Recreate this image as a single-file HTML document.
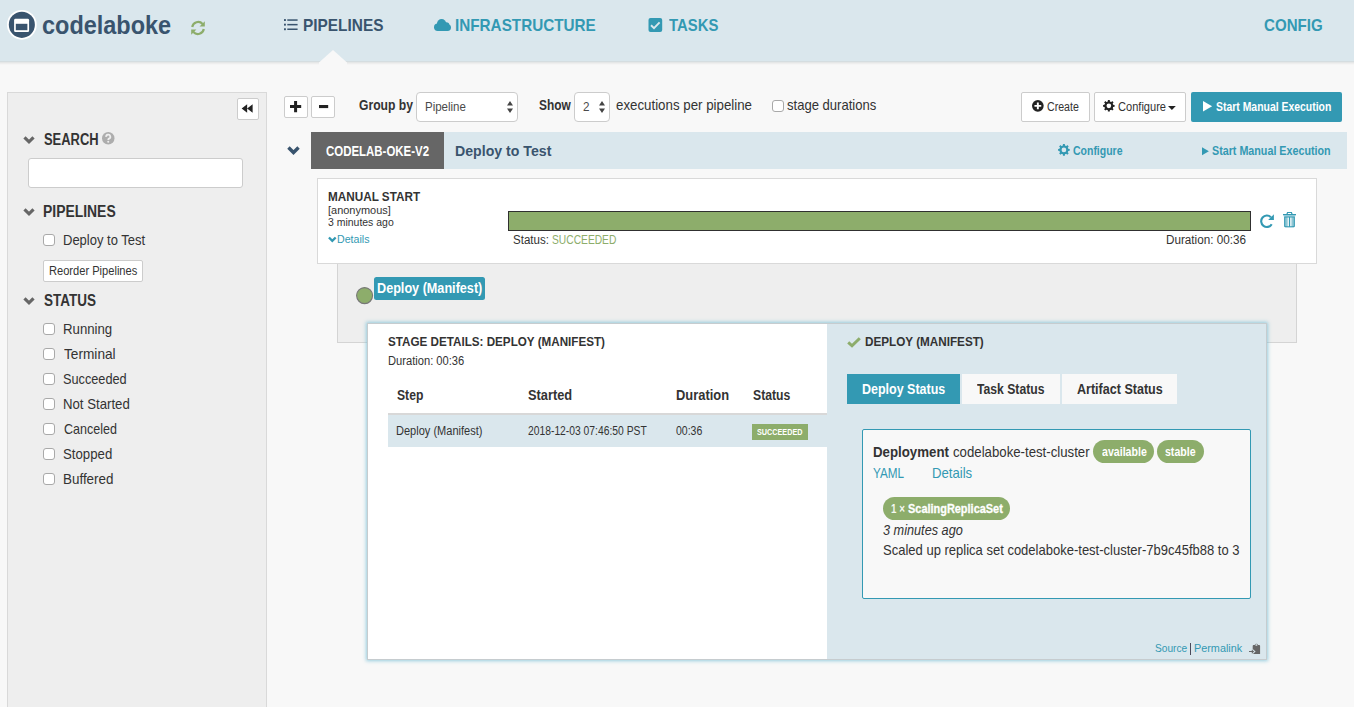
<!DOCTYPE html>
<html><head><meta charset="utf-8"><title>codelaboke - Pipelines</title>
<style>
html,body{margin:0;padding:0}
body{width:1354px;height:707px;overflow:hidden;background:#f8f8f8;font-family:"Liberation Sans",sans-serif;position:relative;color:#333333}
.a{position:absolute;box-sizing:border-box}
.t{position:absolute;line-height:1;white-space:nowrap;transform-origin:0 50%;display:block}
.btn{background:#fff;border:1px solid #ccc;border-radius:2px}
.cb{width:12px;height:12px;background:#fff;border:1px solid #a9a9a9;border-radius:3px}
svg{position:absolute;overflow:visible}
</style></head>
<body>

<!-- header -->
<div class="a" style="left:0;top:0;width:1354px;height:61px;background:#dae7ed"></div>
<div class="a" style="left:0;top:61px;width:1354px;height:4px;background:linear-gradient(#d5dde0 0,#d5dde0 25%,#e5e7e7 25%,#e5e7e7 50%,#eeeeee 50%,#eeeeee 75%,#f5f5f5 75%)"></div>
<svg style="left:319px;top:50px" width="28" height="15" viewBox="0 0 28 15"><path d="M0 12.5 L14 0 L28 12.5 V15 H0 Z" fill="#f8f8f8"/></svg>
<!-- logo -->
<svg style="left:7.3px;top:9.9px" width="29.7" height="29.7" viewBox="0 0 29.7 29.7"><circle cx="14.85" cy="14.85" r="14.85" fill="#fff"/><circle cx="14.85" cy="14.85" r="13.05" fill="#39546e"/><rect x="7.1" y="8.85" width="15" height="13.25" rx="1.4" fill="#fff"/><rect x="8.8" y="13.8" width="11.6" height="6.4" fill="#39546e"/></svg>
<!-- refresh icon -->
<svg style="left:190.3px;top:19.5px" width="16" height="16" viewBox="0 0 16 16"><g fill="none" stroke="#8dad6b" stroke-width="2.2"><path d="M2.2 7 A6 6 0 0 1 12.6 4"/><path d="M13.8 9 A6 6 0 0 1 3.4 12"/></g><path d="M14.8 1.2 V6.4 H9.6 Z" fill="#8dad6b"/><path d="M1.2 14.8 V9.6 H6.4 Z" fill="#8dad6b"/></svg>
<!-- nav icons -->
<svg style="left:283.9px;top:19.2px" width="13.6" height="11.3" viewBox="0 0 13.6 11.3"><g fill="#39546e"><rect x="0" y="0.1" width="1.9" height="1.9"/><rect x="3.3" y="0.3" width="10.3" height="1.5"/><rect x="0" y="4.7" width="1.9" height="1.9"/><rect x="3.3" y="4.9" width="10.3" height="1.5"/><rect x="0" y="9.3" width="1.9" height="1.9"/><rect x="3.3" y="9.5" width="10.3" height="1.5"/></g></svg>
<svg style="left:434px;top:19px" width="17" height="12" viewBox="0 0 17 12"><g fill="#3399b3"><circle cx="3.7" cy="8.3" r="3.7"/><circle cx="7.6" cy="4.7" r="4.7"/><circle cx="12.2" cy="6.4" r="3.2"/><circle cx="13.6" cy="8.6" r="3.4"/><rect x="3.7" y="6" width="9.9" height="6"/></g></svg>
<svg style="left:647.5px;top:18px" width="15" height="14" viewBox="0 0 15 14"><rect x="0.5" y="0" width="13.7" height="14" rx="2" fill="#3399b3"/><path d="M3 7.2 L6 10.1 L11.6 4.3" fill="none" stroke="#dae7ed" stroke-width="1.9"/></svg>

<!-- sidebar -->
<div class="a" style="left:7px;top:92px;width:260px;height:640px;background:#eeeeee;border:1px solid #d9d9d9"></div>
<div class="a btn" style="left:237px;top:98px;width:22px;height:22px"></div>
<svg style="left:240.8px;top:104.2px" width="12.3" height="9" viewBox="0 0 14 11"><path d="M7 0.3 V10.7 L0.3 5.5 Z M13.7 0.3 V10.7 L7 5.5 Z" fill="#222"/></svg>
<svg style="left:23px;top:136.4px" width="12" height="7.9" viewBox="0 0 11 7.5"><path d="M1.2 1.3 L5.5 5.6 L9.8 1.3" fill="none" stroke="#666" stroke-width="3.0" stroke-linejoin="miter"/></svg>
<svg style="left:23px;top:208.4px" width="12" height="7.9" viewBox="0 0 11 7.5"><path d="M1.2 1.3 L5.5 5.6 L9.8 1.3" fill="none" stroke="#666" stroke-width="3.0" stroke-linejoin="miter"/></svg>
<svg style="left:23px;top:297.4px" width="12" height="7.9" viewBox="0 0 11 7.5"><path d="M1.2 1.3 L5.5 5.6 L9.8 1.3" fill="none" stroke="#666" stroke-width="3.0" stroke-linejoin="miter"/></svg>
<svg style="left:102.1px;top:132px" width="12.5" height="12.5" viewBox="0 0 12.6 12.6"><circle cx="6.3" cy="6.3" r="6.3" fill="#adadad"/><path d="M4.2 4.9 A2.1 2.1 0 1 1 7 6.7 Q6.3 7.1 6.3 8" fill="none" stroke="#eee" stroke-width="1.8"/><circle cx="6.3" cy="9.9" r="1.05" fill="#eee"/></svg>
<div class="a" style="left:28px;top:158px;width:215px;height:30px;background:#fff;border:1px solid #ccc;border-radius:3px"></div>
<div class="a cb" style="left:43px;top:234px"></div>
<div class="a btn" style="left:43px;top:260px;width:100px;height:22px"></div>
<div class="a cb" style="left:43px;top:323px"></div><div class="a cb" style="left:43px;top:348px"></div><div class="a cb" style="left:43px;top:373px"></div><div class="a cb" style="left:43px;top:398px"></div><div class="a cb" style="left:43px;top:423px"></div><div class="a cb" style="left:43px;top:448px"></div><div class="a cb" style="left:43px;top:473px"></div>

<!-- toolbar -->
<div class="a btn" style="left:284px;top:96px;width:24px;height:22px"></div>
<svg style="left:290px;top:100.8px" width="11.2" height="11.2" viewBox="0 0 11.2 11.2"><path d="M4.1 0 H7.1 V4.1 H11.2 V7.1 H7.1 V11.2 H4.1 V7.1 H0 V4.1 H4.1 Z" fill="#222"/></svg>
<div class="a btn" style="left:311px;top:96px;width:24px;height:22px"></div>
<svg style="left:319px;top:104.8px" width="9.2" height="3.1" viewBox="0 0 9.2 3.1"><rect width="9.2" height="3.1" fill="#222"/></svg>
<div class="a" style="left:416px;top:92px;width:102px;height:30px;background:#fff;border:1px solid #ccc;border-radius:4px"></div>
<svg style="left:507.3px;top:101px" width="6" height="12" viewBox="0 0 6 12"><path d="M3 0 L6 4.6 H0 Z M3 12 L6 7.4 H0 Z" fill="#444"/></svg>
<div class="a" style="left:574px;top:92px;width:36px;height:30px;background:#fff;border:1px solid #ccc;border-radius:4px"></div>
<svg style="left:599.3px;top:101px" width="6" height="12" viewBox="0 0 6 12"><path d="M3 0 L6 4.6 H0 Z M3 12 L6 7.4 H0 Z" fill="#444"/></svg>
<div class="a cb" style="left:772px;top:100px"></div>
<div class="a btn" style="left:1021px;top:92px;width:69px;height:30px;border-radius:2px"></div>
<svg style="left:1032.1px;top:99.9px" width="11.7" height="11.7" viewBox="0 0 11 11"><circle cx="5.5" cy="5.5" r="5.5" fill="#222"/><path d="M4.6 2.3 H6.4 V4.6 H8.7 V6.4 H6.4 V8.7 H4.6 V6.4 H2.3 V4.6 H4.6 Z" fill="#fff"/></svg>
<div class="a btn" style="left:1094px;top:92px;width:92px;height:30px;border-radius:2px"></div>
<svg style="left:1103px;top:100.1px" width="11.7" height="11.7" viewBox="0 0 11.7 11.7"><circle cx="5.85" cy="5.85" r="4.43" fill="#222"/><path d="M4.81 1.65 L4.89 0.08 L6.81 0.08 L6.89 1.65 L8.08 2.14 L9.25 1.09 L10.61 2.45 L9.56 3.62 L10.05 4.81 L11.62 4.89 L11.62 6.81 L10.05 6.89 L9.56 8.08 L10.61 9.25 L9.25 10.61 L8.08 9.56 L6.89 10.05 L6.81 11.62 L4.89 11.62 L4.81 10.05 L3.62 9.56 L2.45 10.61 L1.09 9.25 L2.14 8.08 L1.65 6.89 L0.08 6.81 L0.08 4.89 L1.65 4.81 L2.14 3.62 L1.09 2.45 L2.45 1.09 L3.62 2.14 Z M3.51 5.85 A2.34 2.34 0 1 0 8.19 5.85 A2.34 2.34 0 1 0 3.51 5.85 Z" fill="#222" fill-rule="evenodd"/><circle cx="5.85" cy="5.85" r="2.34" fill="#fff"/></svg>
<svg style="left:1168px;top:106px" width="7.8" height="4" viewBox="0 0 7.4 3.6"><path d="M0 0 H7.4 L3.7 3.6 Z" fill="#222"/></svg>
<div class="a" style="left:1191px;top:92px;width:151px;height:30px;border-radius:2px;background:#3399b3"></div>
<svg style="left:1203.1px;top:101.4px" width="9.1" height="10.5" viewBox="0 0 8.7 10"><path d="M0 0 L8.7 5 L0 10 Z" fill="#fff"/></svg>

<!-- pipeline header -->
<svg style="left:287px;top:145.6px" width="13" height="8.8" viewBox="0 0 11 7.5"><path d="M1.2 1.3 L5.5 5.6 L9.8 1.3" fill="none" stroke="#39546e" stroke-width="2.9" stroke-linejoin="miter"/></svg>
<div class="a" style="left:311px;top:132px;width:1036px;height:37px;background:#dae7ed"></div>
<div class="a" style="left:311px;top:132px;width:133px;height:37px;background:#666666"></div>
<svg style="left:1058px;top:144px" width="11.8" height="11.8" viewBox="0 0 11.8 11.8"><circle cx="5.9" cy="5.9" r="4.47" fill="#3399b3"/><path d="M4.85 1.66 L4.93 0.08 L6.87 0.08 L6.95 1.66 L8.15 2.16 L9.33 1.10 L10.70 2.47 L9.64 3.65 L10.14 4.85 L11.72 4.93 L11.72 6.87 L10.14 6.95 L9.64 8.15 L10.70 9.33 L9.33 10.70 L8.15 9.64 L6.95 10.14 L6.87 11.72 L4.93 11.72 L4.85 10.14 L3.65 9.64 L2.47 10.70 L1.10 9.33 L2.16 8.15 L1.66 6.95 L0.08 6.87 L0.08 4.93 L1.66 4.85 L2.16 3.65 L1.10 2.47 L2.47 1.10 L3.65 2.16 Z M3.54 5.90 A2.36 2.36 0 1 0 8.26 5.90 A2.36 2.36 0 1 0 3.54 5.90 Z" fill="#3399b3" fill-rule="evenodd"/><circle cx="5.9" cy="5.9" r="2.36" fill="#dae7ed"/></svg>
<svg style="left:1201.7px;top:147.4px" width="6.9" height="8.4" viewBox="0 0 6.7 7.8"><path d="M0 0 L6.7 3.9 L0 7.8 Z" fill="#3399b3"/></svg>

<!-- stage graph area -->
<div class="a" style="left:337px;top:255px;width:960px;height:88px;background:#eeeeee;border:1px solid #d4d4d4"></div>
<!-- execution box -->
<div class="a" style="left:317px;top:178px;width:1000px;height:86px;background:#fff;border:1px solid #d9d9d9"></div>
<svg style="left:328.3px;top:235.8px" width="8.6" height="6.8" viewBox="0 0 11 7.5"><path d="M1.2 1.3 L5.5 5.6 L9.8 1.3" fill="none" stroke="#3399b3" stroke-width="3.0" stroke-linejoin="miter"/></svg>
<div class="a" style="left:508px;top:211px;width:743.3px;height:20.3px;background:#8dad6b;border:1px solid #303030"></div>
<!-- repeat icon -->
<svg style="left:1260px;top:213.8px" width="14" height="14" viewBox="0 0 14 14"><path d="M11.7 10.3 A5.7 5.7 0 1 1 10.9 3.2" fill="none" stroke="#3399b3" stroke-width="2.1"/><path d="M13.9 0.2 V6.1 H8.1 Z" fill="#3399b3"/></svg>
<!-- trash -->
<svg style="left:1283.2px;top:211.8px" width="13" height="15.2" viewBox="0 0 13 15.2"><g fill="#3399b3"><path d="M4.1 0 H8.9 L9.6 2 H13 V3.2 H0 V2 H3.4 Z M5 1 L4.7 2 H8.3 L8 1 Z" fill-rule="evenodd"/><rect x="0.6" y="3.2" width="11.8" height="1.2" opacity=".45"/><path d="M1.2 4.6 H11.8 V13.9 Q11.8 15.2 10.5 15.2 H2.5 Q1.2 15.2 1.2 13.9 Z" opacity=".55"/><path d="M1.2 4.6 H11.8 V13.9 Q11.8 15.2 10.5 15.2 H2.5 Q1.2 15.2 1.2 13.9 Z M2.2 5.6 V13.8 Q2.2 14.2 2.6 14.2 H10.4 Q10.8 14.2 10.8 13.8 V5.6 Z" fill-rule="evenodd"/><rect x="5.9" y="5" width="1.3" height="9.6"/></g><rect x="4.7" y="5.6" width="1.1" height="8.6" fill="#fff"/><rect x="7.3" y="5.6" width="1.1" height="8.6" fill="#fff"/></svg>
<!-- stage node -->
<svg style="left:355.6px;top:287.3px" width="17.2" height="17.2" viewBox="0 0 17.4 17.4"><circle cx="8.7" cy="8.7" r="8.1" fill="#8dad6b" stroke="#777" stroke-width="1.1"/></svg>
<div class="a" style="left:374px;top:277px;width:111px;height:23px;border-radius:2.5px;background:#3399b3"></div>

<!-- details panel -->
<div class="a" style="left:367px;top:323px;width:900px;height:337px;background:#fff;border:1px solid #c6cccf;box-shadow:0 0 3.5px 1px rgba(125,195,217,.78)"></div>
<div class="a" style="left:827px;top:324px;width:439px;height:335px;background:#dae7ed"></div>
<div class="a" style="left:388px;top:413px;width:439px;height:34px;background:#dae7ed;border-top:2px solid #d8d8d8"></div>
<div class="a" style="left:752.2px;top:424.3px;width:55.8px;height:15.8px;background:#8dad6b"></div>
<!-- ok -->
<svg style="left:846.8px;top:336.6px" width="14" height="10.4" viewBox="0 0 14 10.4"><path d="M1.2 5.4 L5 8.8 L12.8 1.2" fill="none" stroke="#8dad6b" stroke-width="3"/></svg>
<div class="a" style="left:847px;top:374px;width:113px;height:30px;background:#3399b3"></div>
<div class="a" style="left:962.3px;top:374px;width:97.7px;height:30px;background:#f8f8f8"></div>
<div class="a" style="left:1062.3px;top:374px;width:115px;height:30px;background:#f8f8f8"></div>
<div class="a" style="left:862px;top:429px;width:389px;height:170px;background:#f8f8f8;border:1px solid #3399b3;border-radius:2px"></div>
<div class="a" style="left:1093.3px;top:440.2px;width:60.9px;height:22.8px;border-radius:11.4px;background:#8dad6b"></div>
<div class="a" style="left:1157.2px;top:440.2px;width:47.1px;height:22.8px;border-radius:11.4px;background:#8dad6b"></div>
<div class="a" style="left:883px;top:497.3px;width:127px;height:22.8px;border-radius:11.4px;background:#8dad6b"></div>
<!-- clipboard -->
<div class="a" style="left:1190px;top:643px;width:1px;height:12px;background:#4a4a5a"></div>
<svg style="left:1249px;top:642.8px" width="11.4" height="11" viewBox="0 0 11.4 11"><path d="M4.3 2 H5.7 A1.75 1.75 0 0 1 9.1 2 H10.5 L11.1 2.7 V11 H3.7 V2.7 Z" fill="#666"/><rect x="6.3" y="1.2" width="2.2" height="1.5" rx="0.7" fill="#dae7ed"/><path d="M3.7 6 L6.6 8.6 L3.7 11.2 Z" fill="#dae7ed"/><path d="M0 8.1 H2.8 V6.8 L5.2 8.6 L2.8 10.4 V9.1 H0 Z" fill="#666"/></svg>
<span class="t" style="left:41.59px;top:13px;font-size:25.7px;font-weight:700;transform:scaleX(0.9136);color:#39546e">codelaboke</span>
<span class="t" style="left:303.39px;top:17px;font-size:17px;font-weight:700;transform:scaleX(0.9057);color:#39546e">PIPELINES</span>
<span class="t" style="left:455.10px;top:17px;font-size:17px;font-weight:700;transform:scaleX(0.8981);color:#3399b3">INFRASTRUCTURE</span>
<span class="t" style="left:669.40px;top:17px;font-size:17px;font-weight:700;transform:scaleX(0.8750);color:#3399b3">TASKS</span>
<span class="t" style="left:1263.60px;top:17px;font-size:17px;font-weight:700;transform:scaleX(0.8877);color:#3399b3">CONFIG</span>
<span class="t" style="left:43.80px;top:132px;font-size:16px;font-weight:700;transform:scaleX(0.8075);color:#333333">SEARCH</span>
<span class="t" style="left:42.83px;top:204px;font-size:16px;font-weight:700;transform:scaleX(0.8695);color:#333333">PIPELINES</span>
<span class="t" style="left:43.50px;top:293px;font-size:16px;font-weight:700;transform:scaleX(0.8426);color:#333333">STATUS</span>
<span class="t" style="left:62.80px;top:233px;font-size:14.5px;font-weight:400;transform:scaleX(0.8967);color:#333333">Deploy to Test</span>
<span class="t" style="left:49.07px;top:265px;font-size:12px;font-weight:400;transform:scaleX(0.9255);color:#333333">Reorder Pipelines</span>
<span class="t" style="left:62.79px;top:322px;font-size:14.5px;font-weight:400;transform:scaleX(0.9113);color:#333333">Running</span>
<span class="t" style="left:63.70px;top:347px;font-size:14.5px;font-weight:400;transform:scaleX(0.9426);color:#333333">Terminal</span>
<span class="t" style="left:62.82px;top:372px;font-size:14.5px;font-weight:400;transform:scaleX(0.8775);color:#333333">Succeeded</span>
<span class="t" style="left:62.79px;top:397px;font-size:14.5px;font-weight:400;transform:scaleX(0.9097);color:#333333">Not Started</span>
<span class="t" style="left:63.70px;top:422px;font-size:14.5px;font-weight:400;transform:scaleX(0.8639);color:#333333">Canceled</span>
<span class="t" style="left:62.79px;top:447px;font-size:14.5px;font-weight:400;transform:scaleX(0.9113);color:#333333">Stopped</span>
<span class="t" style="left:62.78px;top:472px;font-size:14.5px;font-weight:400;transform:scaleX(0.9245);color:#333333">Buffered</span>
<span class="t" style="left:358.70px;top:98px;font-size:14.5px;font-weight:700;transform:scaleX(0.8375);color:#333333">Group by</span>
<span class="t" style="left:425.12px;top:100px;font-size:13px;font-weight:400;transform:scaleX(0.8844);color:#4a4a4a">Pipeline</span>
<span class="t" style="left:538.70px;top:98px;font-size:14.5px;font-weight:700;transform:scaleX(0.8205);color:#333333">Show</span>
<span class="t" style="left:583.00px;top:100px;font-size:13px;font-weight:400;transform:scaleX(0.9000);color:#4a4a4a">2</span>
<span class="t" style="left:615.80px;top:98px;font-size:14.5px;font-weight:400;transform:scaleX(0.9169);color:#333333">executions per pipeline</span>
<span class="t" style="left:786.50px;top:98px;font-size:14.5px;font-weight:400;transform:scaleX(0.9010);color:#333333">stage durations</span>
<span class="t" style="left:1046.70px;top:101px;font-size:12px;font-weight:400;transform:scaleX(0.8833);color:#333333">Create</span>
<span class="t" style="left:1118.00px;top:101px;font-size:12px;font-weight:400;transform:scaleX(0.9231);color:#333333">Configure</span>
<span class="t" style="left:1216.30px;top:100px;font-size:13px;font-weight:700;transform:scaleX(0.8021);color:#ffffff">Start Manual Execution</span>
<span class="t" style="left:326.00px;top:144px;font-size:14px;font-weight:700;transform:scaleX(0.8175);color:#ffffff">CODELAB-OKE-V2</span>
<span class="t" style="left:454.89px;top:143px;font-size:15.5px;font-weight:700;transform:scaleX(0.9124);color:#39546e">Deploy to Test</span>
<span class="t" style="left:1073.30px;top:144px;font-size:13.5px;font-weight:700;transform:scaleX(0.7766);color:#3399b3">Configure</span>
<span class="t" style="left:1212.40px;top:144px;font-size:13.5px;font-weight:700;transform:scaleX(0.7946);color:#3399b3">Start Manual Execution</span>
<span class="t" style="left:327.63px;top:190px;font-size:13.5px;font-weight:700;transform:scaleX(0.8686);color:#333333">MANUAL START</span>
<span class="t" style="left:327.70px;top:205px;font-size:11.5px;font-weight:400;transform:scaleX(0.9538);color:#333333">[anonymous]</span>
<span class="t" style="left:327.80px;top:217px;font-size:11.5px;font-weight:400;transform:scaleX(0.9097);color:#333333">3 minutes ago</span>
<span class="t" style="left:337.08px;top:234px;font-size:11.5px;font-weight:400;transform:scaleX(0.9235);color:#3399b3">Details</span>
<span class="t" style="left:513.24px;top:234px;font-size:12px;font-weight:400;transform:scaleX(0.9611);color:#333333">Status:</span>
<span class="t" style="left:551.95px;top:234px;font-size:12px;font-weight:400;transform:scaleX(0.8541);color:#8dad6b">SUCCEEDED</span>
<span class="t" style="left:1166.02px;top:234px;font-size:12px;font-weight:400;transform:scaleX(0.9753);color:#333333">Duration: 00:36</span>
<span class="t" style="left:376.70px;top:281px;font-size:14px;font-weight:700;transform:scaleX(0.9026);color:#ffffff">Deploy (Manifest)</span>
<span class="t" style="left:387.80px;top:335px;font-size:13.5px;font-weight:700;transform:scaleX(0.8637);color:#333333">STAGE DETAILS: DEPLOY (MANIFEST)</span>
<span class="t" style="left:387.77px;top:355px;font-size:12px;font-weight:400;transform:scaleX(0.9296);color:#333333">Duration: 00:36</span>
<span class="t" style="left:396.70px;top:388px;font-size:14.5px;font-weight:700;transform:scaleX(0.8387);color:#333333">Step</span>
<span class="t" style="left:527.70px;top:388px;font-size:14.5px;font-weight:700;transform:scaleX(0.8837);color:#333333">Started</span>
<span class="t" style="left:675.81px;top:388px;font-size:14.5px;font-weight:700;transform:scaleX(0.8897);color:#333333">Duration</span>
<span class="t" style="left:752.70px;top:388px;font-size:14.5px;font-weight:700;transform:scaleX(0.8409);color:#333333">Status</span>
<span class="t" style="left:395.82px;top:425px;font-size:12.5px;font-weight:400;transform:scaleX(0.8825);color:#333333">Deploy (Manifest)</span>
<span class="t" style="left:527.70px;top:425px;font-size:12px;font-weight:400;transform:scaleX(0.8594);color:#333333">2018-12-03 07:46:50 PST</span>
<span class="t" style="left:676.00px;top:425px;font-size:12px;font-weight:400;transform:scaleX(0.8767);color:#333333">00:36</span>
<span class="t" style="left:757.30px;top:427px;font-size:9.5px;font-weight:700;transform:scaleX(0.7617);color:#ffffff">SUCCEEDED</span>
<span class="t" style="left:864.73px;top:335px;font-size:13.5px;font-weight:700;transform:scaleX(0.8669);color:#333333">DEPLOY (MANIFEST)</span>
<span class="t" style="left:862.17px;top:381px;font-size:15px;font-weight:700;transform:scaleX(0.8323);color:#ffffff">Deploy Status</span>
<span class="t" style="left:977.30px;top:381px;font-size:15px;font-weight:700;transform:scaleX(0.8120);color:#333333">Task Status</span>
<span class="t" style="left:1077.00px;top:381px;font-size:15px;font-weight:700;transform:scaleX(0.8363);color:#333333">Artifact Status</span>
<span class="t" style="left:872.79px;top:445px;font-size:14.5px;font-weight:700;transform:scaleX(0.9146);color:#333333">Deployment</span>
<span class="t" style="left:953.30px;top:445px;font-size:14.5px;font-weight:400;transform:scaleX(0.9113);color:#333333">codelaboke-test-cluster</span>
<span class="t" style="left:1101.70px;top:446px;font-size:12.5px;font-weight:700;transform:scaleX(0.8491);color:#ffffff">available</span>
<span class="t" style="left:1165.30px;top:446px;font-size:12.5px;font-weight:700;transform:scaleX(0.8444);color:#ffffff">stable</span>
<span class="t" style="left:873.30px;top:466px;font-size:14.5px;font-weight:400;transform:scaleX(0.8079);color:#3399b3">YAML</span>
<span class="t" style="left:932.09px;top:466px;font-size:14.5px;font-weight:400;transform:scaleX(0.9070);color:#3399b3">Details</span>
<span class="t" style="left:891.30px;top:503px;font-size:12.5px;font-weight:700;transform:scaleX(0.7824);color:rgba(255,255,255,.92)">1 &times;</span>
<span class="t" style="left:908.33px;top:503px;font-size:12.5px;font-weight:700;transform:scaleX(0.8748);color:#ffffff"><span style="-webkit-text-stroke:0.3px #fff">ScalingReplicaSet</span></span>
<span class="t" style="left:883.30px;top:523px;font-size:14.5px;font-weight:400;font-style:italic;transform:scaleX(0.8758);color:#333333">3 minutes ago</span>
<span class="t" style="left:883.10px;top:543px;font-size:14.5px;font-weight:400;transform:scaleX(0.8972);color:#333333">Scaled up replica set codelaboke-test-cluster-7b9c45fb88 to 3</span>
<span class="t" style="left:1154.70px;top:643px;font-size:11.5px;font-weight:400;transform:scaleX(0.8833);color:#3399b3">Source</span>
<span class="t" style="left:1193.66px;top:643px;font-size:11.5px;font-weight:400;transform:scaleX(0.9420);color:#3399b3">Permalink</span>

</body></html>
